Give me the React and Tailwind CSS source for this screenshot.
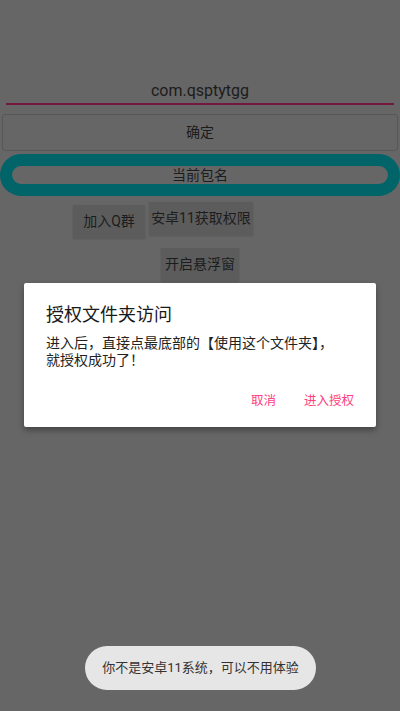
export default function App() {
  return (
    <div className="relative w-[400px] h-[711px] overflow-hidden bg-[#666666] font-['Roboto','Noto_Sans_CJK_SC',sans-serif] text-[#1c1c1c]">
      <div className="pt-[79px]">
        <div className="mx-[6px] h-[26px] border-b-2 border-[#761740] text-center text-[16px] leading-[24px]">
          com.qsptytgg
        </div>
        <div className="mx-[2px] mt-[9px] h-[37px] rounded-[3px] border border-[#575757] flex items-center justify-center text-[14px]">
          确定
        </div>
        <div className="mt-[3px] h-[42px] rounded-full border-[12px] border-[#006468] flex items-center justify-center text-[14px]">
          当前包名
        </div>
        <div className="mt-[6px] pl-[73px] flex items-start gap-[4px] text-[14px]">
          <div className="mt-[3px] w-[72px] h-[33px] bg-[#5c5c5c] shadow-[0_1px_2px_rgba(0,0,0,0.15)] flex items-center justify-center">
            加入Q群
          </div>
          <div className="w-[104px] h-[33px] bg-[#5c5c5c] shadow-[0_1px_2px_rgba(0,0,0,0.15)] flex items-center justify-center">
            安卓11获取权限
          </div>
        </div>
        <div className="mt-[10px] flex justify-center text-[14px]">
          <div className="w-[78px] h-[33px] bg-[#5c5c5c] shadow-[0_1px_2px_rgba(0,0,0,0.15)] flex items-center justify-center">
            开启悬浮窗
          </div>
        </div>
      </div>

      <div className="absolute left-[24px] top-[283px] w-[352px] h-[144px] bg-white rounded-[2px] shadow-[0_3px_6px_rgba(0,0,0,0.35)] px-[22px]">
        <div className="mt-[20px] text-[18px] leading-[24px] text-[#1a1a1a]">授权文件夹访问</div>
        <div className="mt-[8px] text-[14px] leading-[17px] text-[#222]">
          进入后，直接点最底部的【使用这个文件夹】，
          <br />
          就授权成功了！
        </div>
        <div className="mt-[23px] flex justify-end gap-[28px] text-[12.5px] leading-[18px] text-[#ff4081]">
          <span>取消</span>
          <span>进入授权</span>
        </div>
      </div>

      <div className="absolute left-[85px] top-[646px] w-[231px] h-[44px] rounded-full bg-[#e6e6e6] flex items-center justify-center text-[13px] text-[#333]">
        你不是安卓11系统，可以不用体验
      </div>
    </div>
  )
}
